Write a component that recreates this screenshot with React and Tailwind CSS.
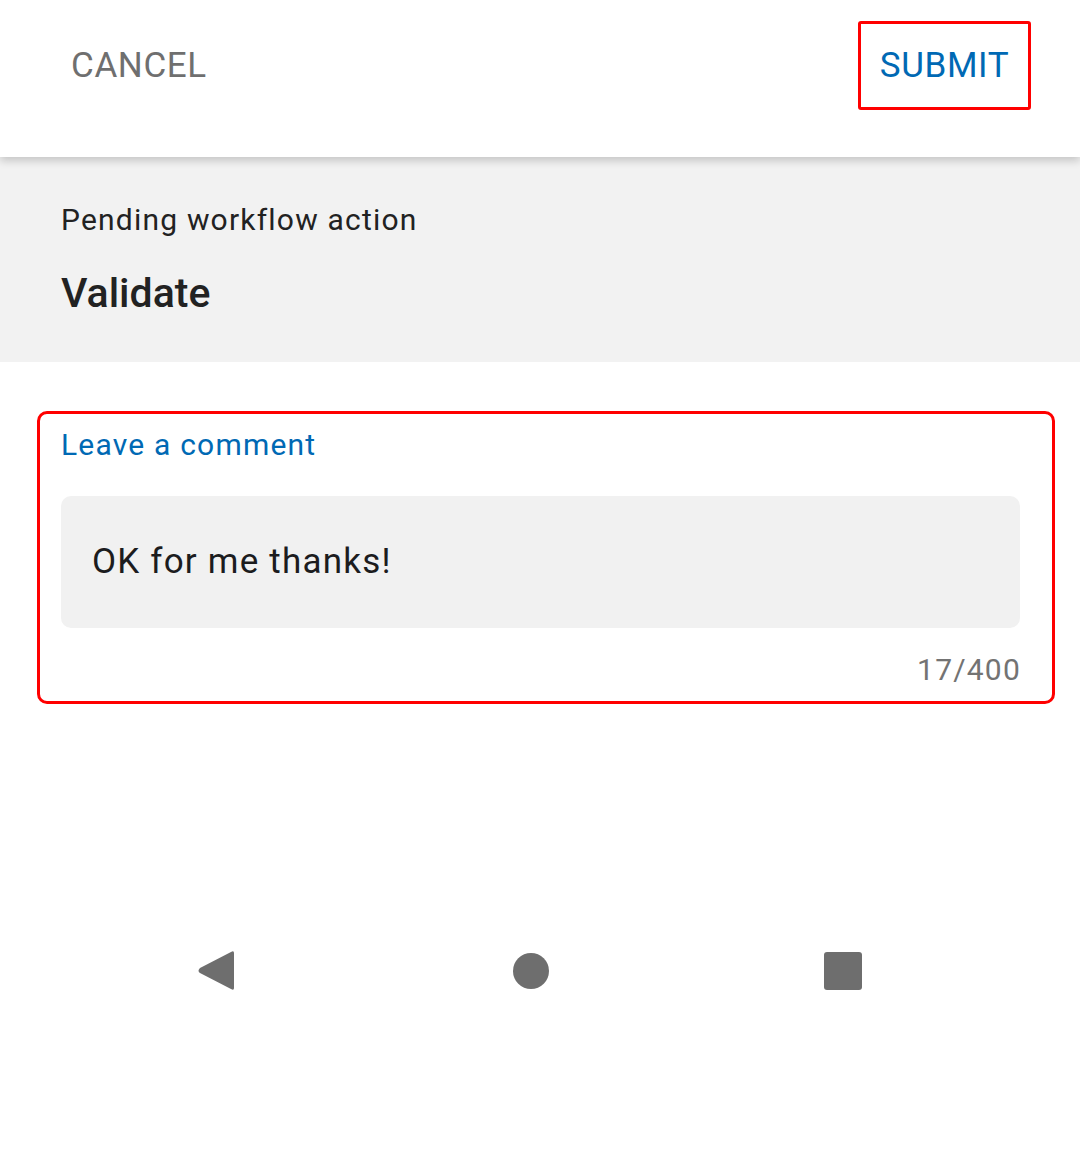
export default function App() {
  return (
    <div className="w-[1080px] h-[1160px] bg-white relative overflow-hidden" style={{ fontFamily: 'Roboto, "Noto Sans", sans-serif' }}>
      <div className="relative z-10 h-[157px] bg-white shadow-[0_4px_8px_rgba(0,0,0,0.18)] flex items-start justify-between pl-[71px] pr-[49px] pt-[21px]">
        <div className="h-[89px] flex items-center">
          <span className="text-[35px] text-[#6f6f6f] tracking-[0.6px] leading-none">CANCEL</span>
        </div>
        <div className="w-[173px] h-[89px] border-[3px] border-[#ff0000] rounded-[3px] flex items-center justify-center">
          <span className="text-[35px] text-[#0069b4] tracking-[0.6px] leading-none">SUBMIT</span>
        </div>
      </div>
      <div className="bg-[#f2f2f2] h-[205px] pl-[61px] pt-[44px]">
        <div className="text-[30px] text-[#222] tracking-[1.2px] leading-[38px]">Pending workflow action</div>
        <div className="text-[41px] font-medium text-[#222] leading-[48px] mt-[30px]">Validate</div>
      </div>
      <div className="px-[37px] pt-[49px]">
        <div className="w-[1018px] h-[293px] border-[3px] border-[#ff0000] rounded-[10px] pl-[21px] pr-[32px] pt-[12px]">
          <div className="text-[30px] text-[#0069b4] tracking-[1.2px] leading-[38px]">Leave a comment</div>
          <div className="mt-[32px] h-[132px] bg-[#f1f1f1] rounded-[10px] flex items-center pl-[31px]">
            <span className="text-[35px] text-[#1c1c1e] tracking-[1.2px]">OK for me thanks!</span>
          </div>
          <div className="text-right text-[30px] text-[#737373] tracking-[1.2px] mt-[23px] leading-[38px] -mr-[1px]">17/400</div>
        </div>
      </div>
      <div className="absolute top-[950px] left-0 w-[1080px] h-[42px]">
        <svg width="1080" height="42" viewBox="0 0 1080 42">
          <path d="M234 3 Q234 0 231 2 L200 18 Q197 21 200 23 L231 39 Q234 41 234 38 Z" fill="#6e6e6e" />
          <circle cx="531" cy="21" r="18" fill="#6e6e6e" />
          <rect x="824" y="2" width="38" height="38" rx="3" fill="#6e6e6e" />
        </svg>
      </div>
    </div>
  );
}
